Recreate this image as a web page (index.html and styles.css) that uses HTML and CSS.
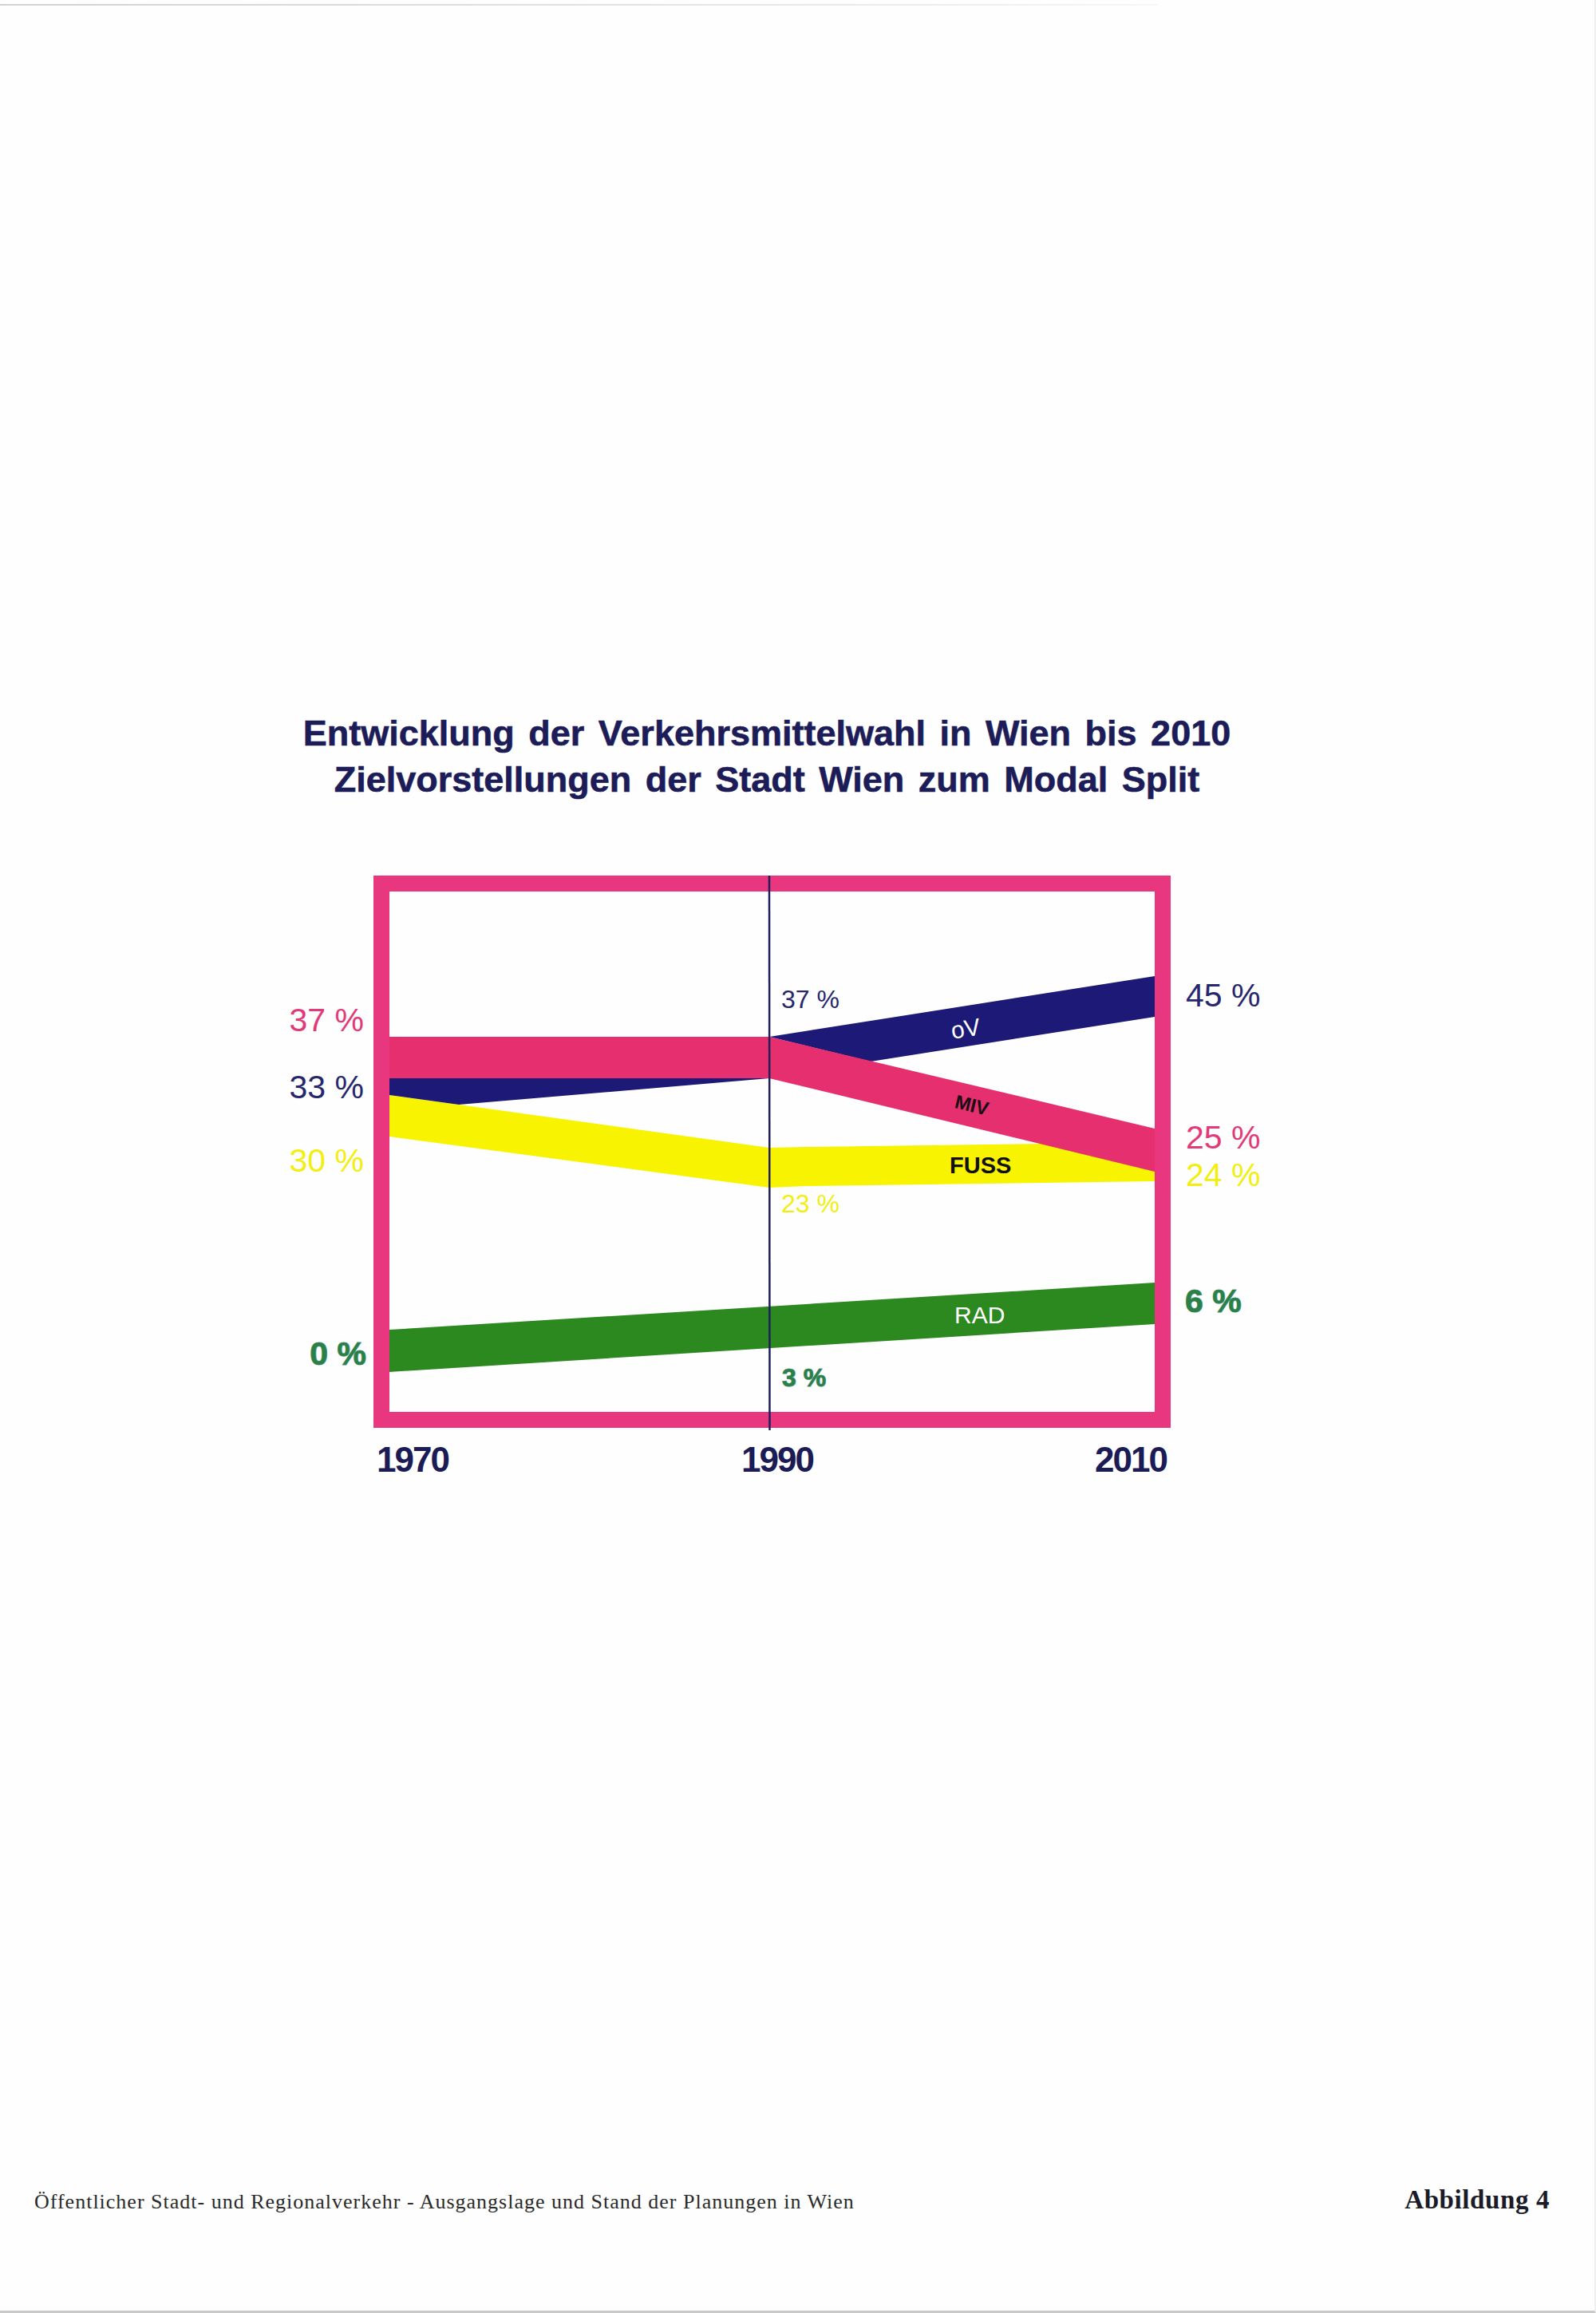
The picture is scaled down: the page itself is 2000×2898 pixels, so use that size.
FILE: index.html
```html
<!DOCTYPE html>
<html lang="de">
<head>
<meta charset="utf-8">
<title>Abbildung 4 – Modal Split Wien</title>
<link rel="stylesheet" href="styles.css">
</head>
<body>
<div class="page">
  <div class="scan-top"></div>
  <header class="title">
    <h1>Entwicklung der Verkehrsmittelwahl in Wien bis 2010</h1>
    <h1>Zielvorstellungen der Stadt Wien zum Modal Split</h1>
  </header>

  <svg class="chart" width="1300" height="800" viewBox="340 1080 1300 800" xmlns="http://www.w3.org/2000/svg">
    <!-- bands -->
    <polygon class="b-fuss" points="488,1371 964,1437 1010,1436 1447,1430 1447,1479 1010,1485 964,1487 488,1423"/>
    <polygon class="b-ov" points="488,1350 964,1350 575,1383 488,1371"/>
    <polygon class="b-ov" points="964,1298 1447,1222 1447,1273 1091,1329"/>
    <polygon class="b-miv" points="488,1298 964,1298 1447,1413 1447,1467 964,1350 488,1350"/>
    <polygon class="b-rad" points="488,1665 1447,1606 1447,1658 488,1718"/>

    <!-- frame -->
    <rect class="frame" x="478" y="1106" width="979" height="672"/>
    <line class="axis" x1="964" y1="1096" x2="964.5" y2="1791"/>

    <!-- band labels -->
    <text class="band-w" x="1210" y="1298" text-anchor="middle" transform="rotate(-9 1210 1288)">oV</text>
    <text class="band-k miv" x="1218" y="1392" text-anchor="middle" transform="rotate(13.5 1218 1383)">MIV</text>
    <text class="band-k" x="1190" y="1469">FUSS</text>
    <text class="band-w" x="1196" y="1657">RAD</text>

    <!-- 1970 values -->
    <text class="val pink" x="456" y="1291" text-anchor="end">37 %</text>
    <text class="val navy" x="456" y="1375" text-anchor="end">33 %</text>
    <text class="val yellow" x="456" y="1467" text-anchor="end">30 %</text>
    <text class="val green" x="459" y="1709" text-anchor="end">0 %</text>

    <!-- 1990 values -->
    <text class="val-s navy" x="979" y="1262">37 %</text>
    <text class="val-s yellow" x="979" y="1518">23 %</text>
    <text class="val-s green" x="980" y="1736">3 %</text>

    <!-- 2010 values -->
    <text class="val navy" x="1486" y="1260">45 %</text>
    <text class="val pink" x="1486" y="1438">25 %</text>
    <text class="val yellow" x="1486" y="1485">24 %</text>
    <text class="val green" x="1485" y="1643">6 %</text>

    <!-- years -->
    <text class="year" x="472" y="1843">1970</text>
    <text class="year" x="929" y="1843">1990</text>
    <text class="year" x="1372" y="1843">2010</text>
  </svg>

  <footer class="footer">
    <span class="source">Öffentlicher Stadt- und Regionalverkehr - Ausgangslage und Stand der Planungen in Wien</span>
    <span class="fig">Abbildung 4</span>
  </footer>
</div>
</body>
</html>
```

FILE: styles.css
```css
* { box-sizing: border-box; }

html, body {
  margin: 0;
  padding: 0;
  background: #ffffff;
}

.page {
  width: 2000px;
  height: 2898px;
  background: #fefefe;
  display: flex;
  flex-direction: column;
  border-bottom: 3px solid #c9c9c9;
  border-right: 2px solid #f0f0f0;
  overflow: hidden;
}

.scan-top {
  margin-top: 5px;
  width: 1450px;
  height: 2px;
  background: linear-gradient(to right, #d2d2d2, #e4e4e4 60%, #f6f6f6);
}

.title {
  margin-top: 883px;
  width: 1922px;
  text-align: center;
}

.title h1 {
  margin: 0;
  font-family: "Liberation Sans", Arial, sans-serif;
  font-weight: bold;
  font-size: 45px;
  line-height: 58px;
  letter-spacing: 0;
  word-spacing: 5px;
  color: #1c1c58;
  -webkit-text-stroke: 0.6px #1c1c58;
}

.chart {
  display: block;
  margin-top: 75px;
  margin-left: 340px;
}

.frame {
  fill: none;
  stroke: #e8377f;
  stroke-width: 20;
}

.axis {
  stroke: #1f1f5e;
  stroke-width: 2.5;
}

.b-fuss { fill: #f8f300; }
.b-ov   { fill: #1c1a76; }
.b-miv  { fill: #e52f6e; }
.b-rad  { fill: #2c891f; }

.chart text {
  font-family: "Liberation Sans", Arial, sans-serif;
}

.val {
  font-size: 41px;
}

.val-s {
  font-size: 32px;
}

.pink   { fill: #e23a78; }
.navy   { fill: #27276e; }
.yellow { fill: #f3ee12; }
.green  {
  fill: #2b8043;
  font-weight: bold;
  stroke: #5a9c9a;
  stroke-width: 1.2px;
  paint-order: stroke;
}

.band-w {
  font-size: 30px;
  fill: #ffffff;
}

.band-k {
  font-size: 29px;
  font-weight: bold;
  fill: #111111;
}

.band-k.miv {
  font-size: 24px;
  fill: #1a0d14;
}

.year {
  font-size: 44px;
  font-weight: bold;
  letter-spacing: -2px;
  fill: #1b1b55;
}

.footer {
  margin-top: auto;
  margin-bottom: 118px;
  display: flex;
  justify-content: space-between;
  align-items: baseline;
  padding: 0 56px 0 43px;
  font-family: "Liberation Serif", "Times New Roman", serif;
  line-height: 36px;
}

.source {
  font-size: 26px;
  letter-spacing: 1px;
  color: #2a2a2a;
}

.fig {
  font-size: 33px;
  font-weight: bold;
  letter-spacing: 0.6px;
  color: #1a1a28;
}
```
